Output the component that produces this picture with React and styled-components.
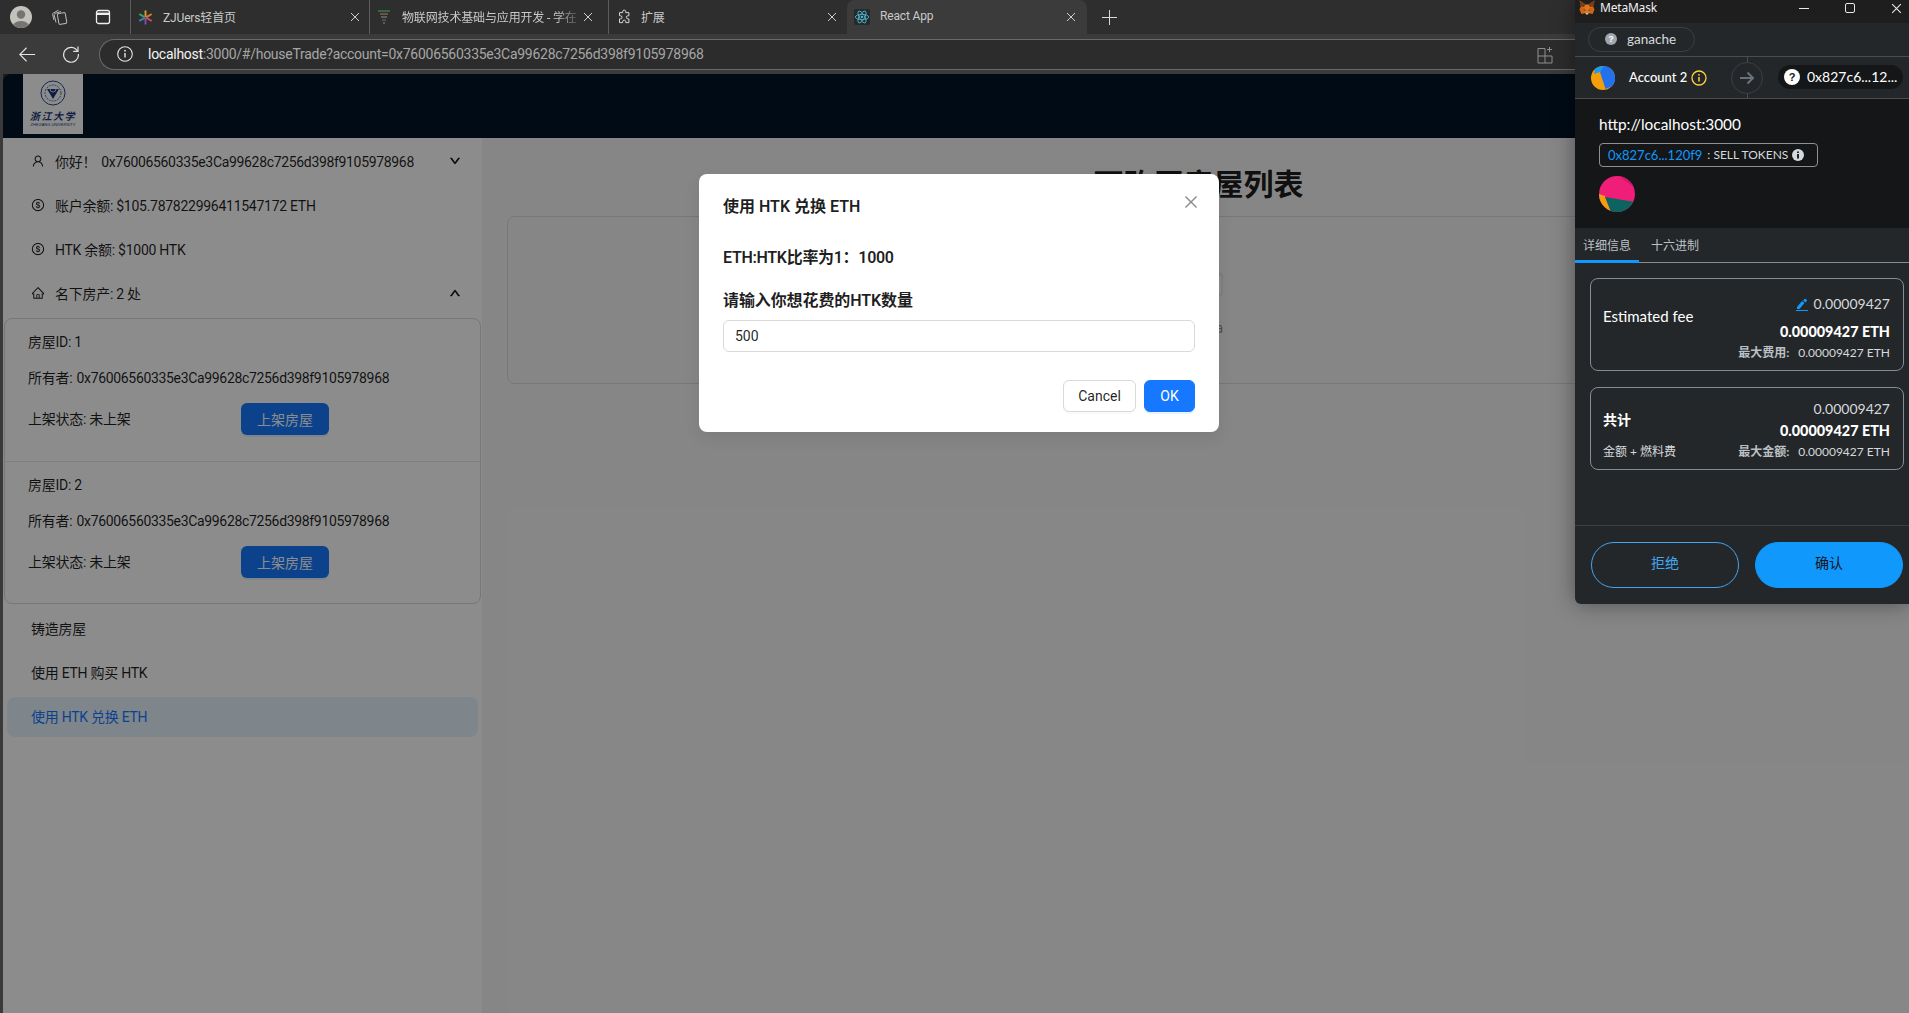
import React from "react";
import styled, { createGlobalStyle } from "styled-components";
import { AiOutlineUser, AiOutlineDollar, AiOutlineHome, AiOutlineDown, AiOutlineUp, AiOutlineClose } from "react-icons/ai";

const SANS = `Roboto, "Noto Sans CJK SC", sans-serif`;
const MM = `Lato, "Noto Sans CJK SC", sans-serif`;

const Global = createGlobalStyle`
  html, body { margin: 0; padding: 0; background: #3a3a3a; }
  * { box-sizing: border-box; }
  body { font-family: ${SANS}; font-size: 14px; overflow: hidden; }
`;

const Page = styled.div`position: relative; width: 1909px; height: 1013px; display: flex; flex-direction: column; overflow: hidden; background: #3a3a3a;`;

/* ---- browser chrome ---- */
const TabStrip = styled.div`height: 34px; background: #2e2e2e; display: flex; align-items: stretch; flex-shrink: 0;`;
const ProfileArea = styled.div`width: 130px; flex-shrink: 0; display: flex; align-items: center; padding-left: 10px;`;
const ProfileIcon = styled.span`display: flex; margin-left: ${p => p.$ml || 0}px;`;
const Tab = styled.div`
  position: relative; width: ${p => p.$w || 239}px; flex-shrink: 0; display: flex; align-items: center;
  padding-left: ${p => p.$pad || 7}px; color: #c9c9c9; font-size: 12px; letter-spacing: -.15px;
  background: ${p => (p.$active ? "#3b3b3b" : "transparent")};
  border-radius: ${p => (p.$active ? "8px 8px 0 0" : "0")};
  border-left: ${p => (p.$active ? "none" : "1px solid #5c5c5c")};
`;
const TabFav = styled.span`width: ${p => p.$w || 15}px; height: 16px; display: inline-flex; align-items: center; justify-content: center; margin-right: ${p => p.$gap || 10}px; flex-shrink: 0;`;
const TabTitle = styled.span`white-space: nowrap; margin-top: -2px; ${p => p.$fade && "-webkit-mask-image: linear-gradient(90deg,#000 88%,rgba(0,0,0,.25));"}`;
const TabClose = styled.span`position: absolute; right: ${p => p.$r || 8}px; top: 11px; width: 12px; height: 12px; display: flex; color: #cfcfcf;`;
const NewTab = styled.div`width: 44px; display: flex; align-items: center; justify-content: center; color: #d8d8d8;`;

const Toolbar = styled.div`height: 40px; background: #3b3b3b; display: flex; align-items: center; flex-shrink: 0;`;
const NavIcon = styled.div`width: ${p => p.$w}px; display: flex; justify-content: center; color: #e4e4e4;`;
const UrlPill = styled.div`
  margin-left: 10px; flex: 1; height: 31px; background: #2c2c2c; border: 1px solid #6a6a6a; border-right: none;
  border-radius: 16px 0 0 16px; display: flex; align-items: center; padding-left: 17px; position: relative; font-size: 14px; letter-spacing: -.27px;
`;
const UrlHost = styled.span`color: #f4f4f4; margin-left: 15px;`;
const UrlRest = styled.span`color: #a6a6a6;`;
const UrlAction = styled.span`position: absolute; left: 1437px; top: 6px; display: flex; color: #8e8e8e;`;

/* ---- app under the modal ---- */
const Content = styled.div`position: relative; flex: 1; display: flex; flex-direction: column; padding-left: 3px; min-height: 0;`;
const AppHeader = styled.header`height: 64px; background: #001529; border-top-left-radius: 8px; padding-left: 20px; flex-shrink: 0;`;
const Logo = styled.div`width: 60px; height: 60px; background: #fff; display: flex; flex-direction: column; align-items: center; padding-top: 6px; color: #1b3a7a;`;
const LogoName = styled.div`font-size: 10px; font-weight: 700; font-style: italic; line-height: 11px; letter-spacing: 1.6px; margin-top: 5px; white-space: nowrap;`;
const LogoSub = styled.div`font-size: 4px; line-height: 6px; white-space: nowrap; font-family: "Liberation Sans", sans-serif;`;
const Body = styled.div`flex: 1; display: flex; min-height: 0;`;
const Sider = styled.aside`width: 479px; flex-shrink: 0; background: #fff; padding-top: 4px; color: rgba(0,0,0,.88); letter-spacing: -.27px;`;
const MenuItem = styled.div`
  height: 40px; margin: ${p => p.$top ?? 0}px 4px 4px; padding: 0 17px 2px 24px; display: flex; align-items: center; border-radius: 8px;
  background: ${p => (p.$selected ? "#e6f4ff" : "transparent")}; color: ${p => (p.$selected ? "#1677ff" : "inherit")};
`;
const MenuIcon = styled.span`width: 14px; height: 14px; margin-right: 10px; display: flex; font-size: 16px; align-items: center; justify-content: center; flex-shrink: 0;`;
const MenuLabel = styled.span`flex: 1; white-space: nowrap;`;
const Greeting = styled.span`margin-right: 5px;`;
const Address = styled.span`letter-spacing: -.33px; margin-left: ${p => p.$ml || 0}px;`;
const Chevron = styled.span`display: flex; font-size: 12px; color: rgba(0,0,0,.88); & svg { stroke: currentColor; stroke-width: 70; }`;
const HouseBox = styled.div`margin: 0 1px; border: 1px solid #d9d9d9; border-radius: 8px; overflow: hidden;`;
const House = styled.div`padding: 12px 23px ${p => (p.$first ? 26 : 25)}px; & + & { border-top: 1px solid #e6e6e6; }`;
const HouseLine = styled.div`height: 22px; line-height: 22px; margin-bottom: 14px; white-space: nowrap;`;
const HouseStatus = styled.div`display: flex; align-items: center; height: 32px;`;
const StatusText = styled.span`width: 213px; margin-top: -2px;`;
const ListButton = styled.button`
  width: 88px; height: 32px; border: none; border-radius: 6px; background: #1677ff; color: #fff;
  font: inherit; padding: 0 0 1px; box-shadow: 0 2px 0 rgba(5,145,255,.1);
`;
const Main = styled.main`flex: 1; background: #f5f5f5; padding: 28px 19px 0 25px; min-width: 0;`;
const PageTitle = styled.h1`margin: 0 0 12px; height: 38px; line-height: 38px; font-size: 30px; font-weight: 700; text-align: center; color: rgba(0,0,0,.88);`;
const EmptyCard = styled.div`height: 168px; border: 1px solid #d9d9d9; border-radius: 8px; display: flex; flex-direction: column; align-items: center; justify-content: center;`;
const EmptyText = styled.div`margin-top: 14px; color: rgba(0,0,0,.45); line-height: 22px;`;

/* ---- modal ---- */
const Mask = styled.div`position: absolute; inset: 0 0 0 3px; background: rgba(0,0,0,.45);`;
const Modal = styled.div`
  position: absolute; left: 696px; top: 100px; width: 520px; height: 258px; background: #fff; border-radius: 8px;
  padding: 21px 24px 20px; display: flex; flex-direction: column; color: rgba(0,0,0,.88); box-shadow: 0 6px 16px rgba(0,0,0,.08);
`;
const ModalTitle = styled.div`font-size: 16px; line-height: 24px; font-weight: 600;`;
const ModalClose = styled.span`position: absolute; right: 19px; top: 19px; display: flex; font-size: 18px; color: rgba(0,0,0,.45);`;
const ModalText = styled.div`font-size: 16px; line-height: 24px; font-weight: 600; margin-top: ${p => p.$top}px; letter-spacing: ${p => p.$ls}px;`;
const ModalInput = styled.input`
  margin-top: 7px; height: 32px; width: 100%; border: 1px solid #d9d9d9; border-radius: 6px; padding: 4px 11px;
  font: 14px ${SANS}; color: rgba(0,0,0,.88); outline: none;
`;
const ModalFooter = styled.div`margin-top: 28px; display: flex; justify-content: flex-end; gap: 8px;`;
const ModalButton = styled.button`
  height: 32px; width: ${p => p.$w}px; border-radius: 6px; padding: 0; font: 14px ${SANS};
  border: 1px solid ${p => (p.$primary ? "#1677ff" : "#d9d9d9")};
  background: ${p => (p.$primary ? "#1677ff" : "#fff")};
  color: ${p => (p.$primary ? "#fff" : "rgba(0,0,0,.88)")};
  box-shadow: 0 2px 0 ${p => (p.$primary ? "rgba(5,145,255,.1)" : "rgba(0,0,0,.02)")};
`;

/* ---- MetaMask window ---- */
const Wallet = styled.div`
  position: absolute; top: 0; right: 0; width: 334px; height: 604px; background: #24272a; color: #fff; font-family: ${MM};
  display: flex; flex-direction: column; border-bottom-left-radius: 6px; overflow: hidden; box-shadow: 0 0 22px rgba(0,0,0,.4);
`;
const WinBar = styled.div`height: 23px; background: #1e1e1e; display: flex; align-items: flex-start; padding-left: 4px; font: 12px/15px "Noto Sans", sans-serif; letter-spacing: -.2px; color: #f0f0f0; position: relative; flex-shrink: 0;`;
const WinTitle = styled.span`margin-left: 5px;`;
const WinBtn = styled.span`position: absolute; left: ${p => p.$x}px; top: -1px; width: 18px; height: 18px; display: flex; align-items: center; justify-content: center; color: #e8e8e8;`;
const NetworkRow = styled.div`height: 34px; padding: 4px 0 0 13px; border-bottom: 1px solid #4a4d50; flex-shrink: 0;`;
const NetworkPill = styled.div`width: 107px; height: 25px; border: 1px solid #3b3f44; border-radius: 13px; display: flex; align-items: center; padding: 0 0 1px 16px; gap: 10px; font-size: 13.5px; color: #d6d9dc;`;
const QDot = styled.span`
  width: ${p => p.$s}px; height: ${p => p.$s}px; border-radius: 50%; background: ${p => p.$bg}; color: ${p => p.$fg};
  font: 700 ${p => p.$f}px "Liberation Sans", sans-serif; display: inline-flex; align-items: center; justify-content: center; flex-shrink: 0;
`;
const AccountRow = styled.div`height: 42px; display: flex; align-items: stretch; border-bottom: 1px solid #4a4d50; flex-shrink: 0;`;
const Sender = styled.div`width: 156px; display: flex; align-items: center; padding-left: 16px; font-size: 13px; font-weight: 500;`;
const SenderName = styled.span`margin: -2px 4px 0 14px; white-space: nowrap;`;
const ArrowSlot = styled.div`width: 32px; display: flex; align-items: center; background: linear-gradient(#4a4d50,#4a4d50) center / 1px 100% no-repeat;`;
const ArrowCircle = styled.div`width: 32px; height: 32px; border-radius: 50%; border: 1px solid #3b3f44; background: #24272a; display: flex; align-items: center; justify-content: center; color: #6a737d;`;
const Recipient = styled.div`margin: 8px 0 0 15px; width: 125px; height: 24px; border-radius: 12px; background: #141618; display: flex; align-items: center; padding: 0 0 1px 6px; gap: 7px; font-size: 14px; white-space: nowrap; overflow: hidden;`;
const Origin = styled.div`height: 129px; background: #141618; padding: 15px 0 0 24px; flex-shrink: 0;`;
const OriginUrl = styled.div`line-height: 20px; font-size: 15.4px;`;
const MethodBox = styled.div`margin-top: 9px; width: 219px; height: 24px; border: 1px solid #8d9196; border-radius: 4px; display: flex; align-items: center; padding: 0 0 1px 8px; font-size: 12px; color: #d6d9dc;`;
const MethodAddr = styled.span`color: #1098fc; font-size: 13px; margin-right: 5px;`;
const MethodInfo = styled.span`margin-left: 4px; display: flex;`;
const TokenIcon = styled.div`margin-top: 9px; width: 36px; height: 36px;`;
const WalletTabs = styled.div`height: 35px; display: flex; border-bottom: 1px solid #848c96; flex-shrink: 0;`;
const WalletTab = styled.div`
  width: 64px; padding-top: 8px; font-size: 12px; color: #bbc0c5; height: 35px; padding-left: ${p => p.$pad}px;
  border-bottom: ${p => (p.$active ? "3px solid #1098fc" : "none")}; white-space: nowrap;
`;
const FeeList = styled.div`flex: 1; padding: 15px 5px 0 15px; min-height: 0;`;
const FeeCard = styled.div`
  height: ${p => p.$h}px; margin-bottom: 16px; border: 1px solid #848c96; border-radius: 8px; padding: ${p => p.$pt}px 13px 0 12px;
  display: flex; justify-content: space-between;
`;
const FeeLeft = styled.div`padding-top: ${p => p.$pt}px;`;
const FeeLabel = styled.div`height: 22px; line-height: 22px; font-size: ${p => (p.$bold ? 14 : 15)}px; font-weight: ${p => (p.$bold ? 700 : 400)};`;
const FeeSub = styled.div`margin-top: 13px; height: 16px; line-height: 16px; font-size: 12px; color: #d6d9dc;`;
const FeeRight = styled.div`display: flex; flex-direction: column; align-items: flex-end;`;
const FeeValue = styled.div`height: 22px; line-height: 22px; font-size: 14px; display: flex; align-items: center; gap: 6px; color: #d6d9dc;`;
const FeeStrong = styled.div`height: 22px; line-height: 22px; font-size: 14.4px; font-weight: 900; margin-top: ${p => p.$mt}px; white-space: nowrap;`;
const FeeMax = styled.div`height: 16px; line-height: 16px; margin-top: 2px; font-size: 12px; color: #d6d9dc; white-space: nowrap;`;
const FeeMaxKey = styled.b`margin-right: 9px; font-weight: 700; color: #bbc0c5;`;
const WalletFooter = styled.div`height: 79px; border-top: 1px solid #3b3f44; padding: 16px 6px 0 16px; display: flex; gap: 16px; flex-shrink: 0;`;
const PillButton = styled.button`
  width: 148px; height: 46px; border-radius: 23px; font: 14px ${MM}; padding: 0 0 6px;
  border: 1px solid ${p => (p.$solid ? "#1098fc" : "#43a5f0")};
  background: ${p => (p.$solid ? "#1098fc" : "transparent")};
  color: ${p => (p.$solid ? "#141618" : "#43a5f0")};
`;

const ZjuFav = () => (
  <svg width="15" height="15" viewBox="0 0 24 24" strokeWidth="3" strokeLinecap="round">
    <path d="M12 2v8" stroke="#d99a2b" /><path d="M12 14v8" stroke="#8a4fa0" />
    <path d="M3 7l7 4" stroke="#3aa060" /><path d="M14 13l7 4" stroke="#c04a70" />
    <path d="M3 17l7-4" stroke="#3e7ac0" /><path d="M14 11l7-4" stroke="#c87a30" />
  </svg>
);
const StackFav = () => (
  <svg width="14" height="16" viewBox="0 0 14 16" strokeWidth="1.6">
    <path d="M1 2h12" stroke="#3f6f5a" /><path d="M3 5h8" stroke="#7a5f4a" /><path d="M4 8h6" stroke="#5a6f80" />
    <path d="M5 11h4" stroke="#7a4a5a" /><path d="M6 14h2" stroke="#4a7a6a" />
  </svg>
);
const PuzzleFav = () => (
  <svg width="15" height="16" viewBox="0 0 24 24" fill="none" stroke="#d8d8d8" strokeWidth="1.6">
    <path d="M9 3.5a2.5 2.5 0 0 1 5 0V5h5v5h-1.5a2.5 2.5 0 0 0 0 5H19v6h-5v-1.5a2.5 2.5 0 0 0-5 0V21H4v-6h1.5a2.5 2.5 0 0 0 0-5H4V5h5z" />
  </svg>
);
const AtomFav = () => (
  <svg width="16" height="16" viewBox="0 0 24 24" fill="none" stroke="#4fb6cf" strokeWidth="1.3">
    <rect width="24" height="24" rx="3" fill="#26292c" stroke="none" />
    <ellipse cx="12" cy="12" rx="10" ry="4" /><ellipse cx="12" cy="12" rx="10" ry="4" transform="rotate(60 12 12)" />
    <ellipse cx="12" cy="12" rx="10" ry="4" transform="rotate(120 12 12)" /><circle cx="12" cy="12" r="2" fill="#4fb6cf" stroke="none" />
  </svg>
);
const Cross = ({ s = 12, w = 1 }) => (
  <svg width={s} height={s} viewBox="0 0 12 12" stroke="currentColor" strokeWidth={w} fill="none"><path d="M2 2l8 8M10 2l-8 8" /></svg>
);
const Avatar = () => (
  <svg width="22" height="22" viewBox="0 0 22 22">
    <circle cx="11" cy="11" r="11" fill="#c4c2bd" /><circle cx="11" cy="8.5" r="4.2" fill="#767470" />
    <path d="M3.2 18.8a8.5 6.5 0 0 1 15.6 0A11 11 0 0 1 3.2 18.8z" fill="#767470" />
  </svg>
);
const Collections = () => (
  <svg width="18" height="18" viewBox="0 0 18 18" fill="none" stroke="#bdbdbd" strokeWidth="1">
    <rect x="7" y="5" width="8" height="11" rx="1.5" transform="rotate(-10 11 10)" />
    <path d="M5 14.5L3.2 7c-.2-.8.2-1.4 1-1.6L10 3.6" /><path d="M3 12L1.6 6.5c-.2-.8.2-1.4 1-1.6L7.5 2.2" />
  </svg>
);
const VerticalTabs = () => (
  <svg width="16" height="16" viewBox="0 0 16 16" fill="none" stroke="#eee" strokeWidth="1.3">
    <rect x="1.5" y="1.5" width="13" height="13" rx="2" /><path d="M1.5 4.8h13" strokeWidth="2.4" />
  </svg>
);
const BackArrow = () => (
  <svg width="18" height="17" viewBox="0 0 20 18" fill="none" stroke="currentColor" strokeWidth="1.2"><path d="M19 9H2M9.5 1.5L2 9l7.500 7.500" /></svg>
);
const Reload = () => (
  <svg width="18" height="18" viewBox="0 0 18 18" fill="none" stroke="currentColor" strokeWidth="1.2">
    <path d="M15.5 6.2A7.4 7.4 0 1 0 16.4 9" /><path d="M16 1.6v4.8h-4.8" />
  </svg>
);
const SiteInfo = () => (
  <svg width="16" height="16" viewBox="0 0 16 16" fill="none" stroke="#e6e6e6" strokeWidth="1.1">
    <circle cx="8" cy="8" r="7.3" /><path d="M8 7v4.6" strokeWidth="1.4" /><circle cx="8" cy="4.7" r=".9" fill="#e6e6e6" stroke="none" />
  </svg>
);
const AddTable = () => (
  <svg width="16" height="18" viewBox="0 0 16 18" fill="none" stroke="currentColor" strokeWidth="1">
    <path d="M1 2.500h7V17H1zM1 10h14v7H8" /><path d="M12.500 1v5M10 3.500h5" />
  </svg>
);
const Emblem = () => (
  <svg width="26" height="26" viewBox="0 0 26 26" fill="none" stroke="#2a4a8a">
    <circle cx="13" cy="13" r="12" strokeWidth="1" /><circle cx="13" cy="13" r="8" strokeWidth=".8" strokeDasharray="2 1" />
    <path d="M7 9h12l-6 10z" fill="#1b3a7a" stroke="none" /><path d="M10 9a3 3 0 0 0 6 0" stroke="#fff" strokeWidth=".8" />
  </svg>
);
const Fox = () => (
  <svg width="16" height="15" viewBox="0 0 32 30">
    <path d="M1 1l12 8h6l12-8-3 12 3 6-4 9-7-2-3 2h-2l-3-2-7 2-4-9 3-6z" fill="#e2761b" />
    <path d="M4 14l8 3-1 6-5 4-4-8z" fill="#cd6116" /><path d="M28 14l-8 3 1 6 5 4 4-8z" fill="#cd6116" />
    <path d="M11 19l3 1-3 2zM21 19l-3 1 3 2z" fill="#233447" /><path d="M13 26h6l-1 3h-4z" fill="#d7c1b3" />
    <path d="M1 1l12 8-3 5-7-1zM31 1L19 9l3 5 7-1z" fill="#763d16" />
  </svg>
);
const AccountIcon = () => (
  <svg width="24" height="24" viewBox="0 0 24 24" style={{ flexShrink: 0 }}>
    <circle cx="12" cy="12" r="12" fill="#f59e0b" /><path d="M12 0a12 12 0 0 1 8.5 20.5L14.5 23 9 6z" fill="#2471ed" />
    <path d="M4 3a12 12 0 0 1 9-3L9 6 3 8z" fill="#1a9bf0" />
  </svg>
);
const TokenArt = () => (
  <svg width="36" height="36" viewBox="0 0 36 36">
    <defs><clipPath id="tk"><circle cx="18" cy="18" r="18" /></clipPath></defs>
    <g clipPath="url(#tk)">
      <rect width="36" height="36" fill="#f01e78" /><path d="M20 0l16 12V0z" fill="#c9186a" />
      <path d="M0 18l6 2 6 16H0z" fill="#f59e0b" /><path d="M6 21l30 5v10H12z" fill="#0c6460" />
    </g>
  </svg>
);
const InkPen = () => (
  <svg width="12" height="13" viewBox="0 0 12 13" fill="#1098fc"><path d="M1 9l5-6 2.500 2-5 6H1zM8 1.500a1.500 1.500 0 1 1 2.500 2l-1 1-2.500-2z" /><path d="M0 12h12v1H0z" /></svg>
);
const TinyInfo = () => (
  <svg width="12" height="12" viewBox="0 0 12 12"><circle cx="6" cy="6" r="6" fill="#d6d9dc" /><path d="M5 5h2v4.500H5zM5 2.500h2v1.600H5z" fill="#24272a" /></svg>
);
const YellowInfo = () => (
  <svg width="16" height="16" viewBox="0 0 16 16" fill="none" stroke="#ffd33d" strokeWidth="1.3">
    <circle cx="8" cy="8" r="7" /><path d="M8 7v4.500" strokeWidth="1.500" /><circle cx="8" cy="4.800" r=".9" fill="#ffd33d" stroke="none" />
  </svg>
);
const RightArrow = () => (
  <svg width="16" height="14" viewBox="0 0 16 14" fill="none" stroke="currentColor" strokeWidth="2"><path d="M1 7h13M8.500 1.500L14 7l-5.500 5.500" /></svg>
);
const EmptyInbox = () => (
  <svg width="64" height="41" viewBox="0 0 64 41" fill="none" stroke="#d9d9d9">
    <ellipse cx="32" cy="33" rx="32" ry="7" fill="#f5f5f5" stroke="none" />
    <path d="M55 12.800L44.900 1.300C44.400.500 43.700 0 42.900 0H21.100c-.8 0-1.500.5-2 1.300L9 12.800V22h46z" />
    <path d="M9 13h12c2 0 3 1.500 3 3s1 3 3 3h10c2 0 3-1.500 3-3s1-3 3-3h12v18a2 2 0 0 1-2 2H11a2 2 0 0 1-2-2z" fill="#fafafa" />
  </svg>
);

const ADDRESS = "0x76006560335e3Ca99628c7256d398f9105978968";
const houses = [1, 2];

export default function App() {
  return (
    <Page>
      <Global />
      <TabStrip>
        <ProfileArea>
          <ProfileIcon><Avatar /></ProfileIcon>
          <ProfileIcon $ml={19}><Collections /></ProfileIcon>
          <ProfileIcon $ml={26}><VerticalTabs /></ProfileIcon>
        </ProfileArea>
        <Tab>
          <TabFav><ZjuFav /></TabFav><TabTitle>ZJUers轻首页</TabTitle>
          <TabClose $r={8}><Cross /></TabClose>
        </Tab>
        <Tab>
          <TabFav $w={14} $gap={11}><StackFav /></TabFav><TabTitle $fade>物联网技术基础与应用开发 - 学在</TabTitle>
          <TabClose $r={14}><Cross /></TabClose>
        </Tab>
        <Tab $pad={8}>
          <TabFav $gap={9}><PuzzleFav /></TabFav><TabTitle>扩展</TabTitle>
          <TabClose $r={9}><Cross /></TabClose>
        </Tab>
        <Tab $active $w={240} $pad={7}>
          <TabFav $w={16} $gap={10}><AtomFav /></TabFav><TabTitle>React App</TabTitle>
          <TabClose $r={10}><Cross /></TabClose>
        </Tab>
        <NewTab><svg width="15" height="15" viewBox="0 0 15 15" stroke="currentColor" fill="none"><path d="M7.500 0v15M0 7.500h15" /></svg></NewTab>
      </TabStrip>
      <Toolbar>
        <NavIcon $w={53}><BackArrow /></NavIcon>
        <NavIcon $w={36}><Reload /></NavIcon>
        <UrlPill>
          <SiteInfo />
          <UrlHost>localhost</UrlHost><UrlRest>:3000/#/houseTrade?account={ADDRESS}</UrlRest>
          <UrlAction><AddTable /></UrlAction>
        </UrlPill>
      </Toolbar>
      <Content>
        <AppHeader>
          <Logo><Emblem /><LogoName>浙江大学</LogoName><LogoSub>ZHEJIANG UNIVERSITY</LogoSub></Logo>
        </AppHeader>
        <Body>
          <Sider>
            <MenuItem>
              <MenuIcon><AiOutlineUser /></MenuIcon>
              <MenuLabel><Greeting>你好！</Greeting><Address>{ADDRESS}</Address></MenuLabel>
              <Chevron><AiOutlineDown /></Chevron>
            </MenuItem>
            <MenuItem>
              <MenuIcon><AiOutlineDollar /></MenuIcon>
              <MenuLabel>账户余额: $105.787822996411547172 ETH</MenuLabel>
            </MenuItem>
            <MenuItem>
              <MenuIcon><AiOutlineDollar /></MenuIcon>
              <MenuLabel>HTK 余额: $1000 HTK</MenuLabel>
            </MenuItem>
            <MenuItem>
              <MenuIcon><AiOutlineHome /></MenuIcon>
              <MenuLabel>名下房产: 2 处</MenuLabel>
              <Chevron><AiOutlineUp /></Chevron>
            </MenuItem>
            <HouseBox>
              {houses.map((id, i) => (
                <House key={id} $first={i === 0}>
                  <HouseLine>房屋ID: {id}</HouseLine>
                  <HouseLine>所有者: <Address $ml={1}>{ADDRESS}</Address></HouseLine>
                  <HouseStatus><StatusText>上架状态: 未上架</StatusText><ListButton>上架房屋</ListButton></HouseStatus>
                </House>
              ))}
            </HouseBox>
            <MenuItem $top={5}><MenuLabel>铸造房屋</MenuLabel></MenuItem>
            <MenuItem><MenuLabel>使用 ETH 购买 HTK</MenuLabel></MenuItem>
            <MenuItem $selected><MenuLabel>使用 HTK 兑换 ETH</MenuLabel></MenuItem>
          </Sider>
          <Main>
            <PageTitle>可购买房屋列表</PageTitle>
            <EmptyCard><EmptyInbox /><EmptyText>No data</EmptyText></EmptyCard>
          </Main>
        </Body>
        <Mask>
          <Modal>
            <ModalTitle>使用 HTK 兑换 ETH</ModalTitle>
            <ModalClose><AiOutlineClose /></ModalClose>
            <ModalText $top={27} $ls={-0.3}>ETH:HTK比率为1：1000</ModalText>
            <ModalText $top={19} $ls={-0.1}>请输入你想花费的HTK数量</ModalText>
            <ModalInput defaultValue="500" />
            <ModalFooter>
              <ModalButton $w={73}>Cancel</ModalButton>
              <ModalButton $w={51} $primary>OK</ModalButton>
            </ModalFooter>
          </Modal>
        </Mask>
      </Content>
      <Wallet>
        <WinBar>
          <Fox /><WinTitle>MetaMask</WinTitle>
          <WinBtn $x={220}><svg width="10" height="1"><rect width="10" height="1" fill="currentColor" /></svg></WinBtn>
          <WinBtn $x={266}><svg width="10" height="10" fill="none" stroke="currentColor"><rect x=".5" y=".5" width="9" height="9" rx="1.500" /></svg></WinBtn>
          <WinBtn $x={312}><Cross s={13} /></WinBtn>
        </WinBar>
        <NetworkRow><NetworkPill><QDot $s={12} $f={9} $bg="#9fa6ae" $fg="#fff">?</QDot>ganache</NetworkPill></NetworkRow>
        <AccountRow>
          <Sender><AccountIcon /><SenderName>Account 2</SenderName><YellowInfo /></Sender>
          <ArrowSlot><ArrowCircle><RightArrow /></ArrowCircle></ArrowSlot>
          <Recipient><QDot $s={16} $f={11} $bg="#fff" $fg="#141618">?</QDot>0x827c6...12...</Recipient>
        </AccountRow>
        <Origin>
          <OriginUrl>http://localhost:3000</OriginUrl>
          <MethodBox><MethodAddr>0x827c6...120f9</MethodAddr>: SELL TOKENS<MethodInfo><TinyInfo /></MethodInfo></MethodBox>
          <TokenIcon><TokenArt /></TokenIcon>
        </Origin>
        <WalletTabs>
          <WalletTab $active $pad={8}>详细信息</WalletTab>
          <WalletTab $pad={12}>十六进制</WalletTab>
        </WalletTabs>
        <FeeList>
          <FeeCard $h={93} $pt={14}>
            <FeeLeft $pt={12}><FeeLabel>Estimated fee</FeeLabel></FeeLeft>
            <FeeRight>
              <FeeValue><InkPen />0.00009427</FeeValue>
              <FeeStrong $mt={6}>0.00009427 ETH</FeeStrong>
              <FeeMax><FeeMaxKey>最大费用:</FeeMaxKey>0.00009427 ETH</FeeMax>
            </FeeRight>
          </FeeCard>
          <FeeCard $h={83} $pt={10}>
            <FeeLeft $pt={11}>
              <FeeLabel $bold>共计</FeeLabel>
              <FeeSub>金额 + 燃料费</FeeSub>
            </FeeLeft>
            <FeeRight>
              <FeeValue>0.00009427</FeeValue>
              <FeeStrong $mt={0}>0.00009427 ETH</FeeStrong>
              <FeeMax><FeeMaxKey>最大金额:</FeeMaxKey>0.00009427 ETH</FeeMax>
            </FeeRight>
          </FeeCard>
        </FeeList>
        <WalletFooter>
          <PillButton>拒绝</PillButton>
          <PillButton $solid>确认</PillButton>
        </WalletFooter>
      </Wallet>
    </Page>
  );
}
